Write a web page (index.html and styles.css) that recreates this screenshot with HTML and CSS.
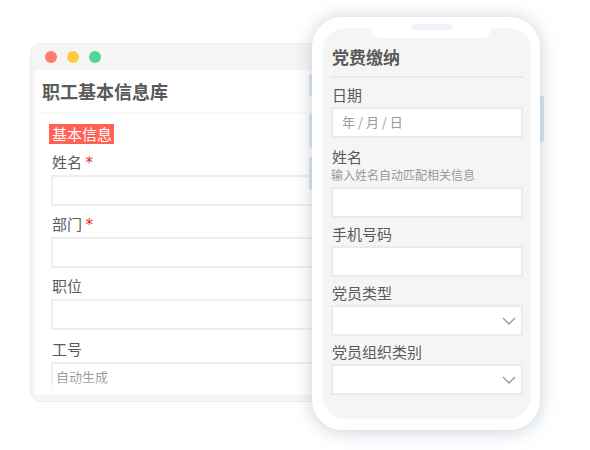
FILE: index.html
```html
<!DOCTYPE html>
<html lang="zh-CN">
<head>
  <meta charset="utf-8">
  <meta name="viewport" content="width=device-width, initial-scale=1">
  <title>职工基本信息库</title>
  <link rel="stylesheet" href="styles.css">
</head>
<body>
  <main class="scene">
    <section class="window">
      <div class="window-bar">
        <span class="dot dot-red"></span>
        <span class="dot dot-yellow"></span>
        <span class="dot dot-green"></span>
      </div>
      <div class="window-body">
        <h1 class="window-title">职工基本信息库</h1>
        <form class="window-form">
          <h2 class="tag">基本信息</h2>
          <div class="field">
            <label class="label" for="name">姓名 <span class="required">*</span></label>
            <input class="control" id="name" type="text">
          </div>
          <div class="field">
            <label class="label" for="department">部门 <span class="required">*</span></label>
            <input class="control" id="department" type="text">
          </div>
          <div class="field">
            <label class="label" for="position">职位</label>
            <input class="control" id="position" type="text">
          </div>
          <div class="field">
            <label class="label" for="number">工号</label>
            <input class="control" id="number" type="text" placeholder="自动生成">
          </div>
        </form>
      </div>
    </section>

    <section class="phone">
      <span class="key key-mute"></span>
      <span class="key key-up"></span>
      <span class="key key-down"></span>
      <span class="key key-power"></span>
      <div class="phone-case">
        <div class="phone-screen">
          <div class="notch">
            <svg class="notch-shape" viewBox="0 0 120 10" preserveAspectRatio="none" aria-hidden="true">
              <path d="M0 0H120C120 6 116 10 110 10H10C4 10 0 6 0 0Z" fill="#fff"/>
            </svg>
            <span class="speaker"></span>
          </div>
          <h1 class="phone-title">党费缴纳</h1>
          <form class="phone-form">
            <div class="field">
              <label class="label" for="date">日期</label>
              <input class="control control-date" id="date" type="text" placeholder="年 / 月 / 日">
            </div>
            <div class="field field-hinted">
              <label class="label" for="member">姓名</label>
              <p class="hint" id="member-hint">输入姓名自动匹配相关信息</p>
              <input class="control" id="member" type="text" aria-describedby="member-hint">
            </div>
            <div class="field">
              <label class="label" for="mobile">手机号码</label>
              <input class="control" id="mobile" type="tel">
            </div>
            <div class="field">
              <label class="label" for="type">党员类型</label>
              <div class="select">
                <select class="control" id="type"><option></option></select>
                <svg class="chevron" viewBox="0 0 14 8" aria-hidden="true"><path d="M1 1L7 7L13 1"/></svg>
              </div>
            </div>
            <div class="field">
              <label class="label" for="group">党员组织类别</label>
              <div class="select">
                <select class="control" id="group"><option></option></select>
                <svg class="chevron" viewBox="0 0 14 8" aria-hidden="true"><path d="M1 1L7 7L13 1"/></svg>
              </div>
            </div>
          </form>
        </div>
      </div>
    </section>
  </main>
</body>
</html>
```
FILE: styles.css
```css
* {
  box-sizing: border-box;
}

body {
  margin: 0;
  background: #fff;
  color: #5a5a5a;
  font-family: "Noto Sans CJK SC", "Noto Sans", sans-serif;
  font-size: 15px;
}

h1,
h2,
p {
  margin: 0;
}

.scene {
  display: grid;
  grid-template-columns: minmax(0, 1fr) 228px;
  align-items: start;
  padding: 17px 50px 20px 30px;
}

/* Desktop window, tucked under the phone on its right side */
.window {
  margin: 26px -20px 0 0;
  padding: 0 0 6px 4px;
  border: 1px solid #ececec;
  border-radius: 11px;
  background: #f5f5f5;
}

.window-bar {
  display: flex;
  align-items: center;
  gap: 10px;
  height: 26px;
  padding-left: 10px;
}

.dot {
  width: 12px;
  height: 12px;
  border-radius: 50%;
}

.dot-red {
  background: #fe7b72;
}

.dot-yellow {
  background: #ffcb3d;
}

.dot-green {
  background: #4ed692;
}

.window-body {
  position: relative;
  padding-bottom: 2px;
  background: #fff;
}

/* The form fades out towards the bottom edge */
.window-body::after {
  content: "";
  position: absolute;
  inset: auto 0 0 0;
  height: 16px;
  background: linear-gradient(rgba(255, 255, 255, 0), #fff 75%);
}

.window-title {
  margin-left: 5px;
  padding-left: 2px;
  border-bottom: 2px solid #f9f9f9;
  font-size: 18px;
  line-height: 42px;
}

.window-form {
  padding: 10px 0 0 16px;
}

.tag {
  width: fit-content;
  margin: 0 0 9px -2px;
  padding: 0 2px 0 3px;
  background: #ff6155;
  color: #fff;
  font-size: 15px;
  font-weight: 400;
  line-height: 20px;
}

.field {
  display: flex;
  flex-direction: column;
}

.label {
  padding-left: 1px;
  line-height: 18px;
}

.required {
  color: #f02020;
  font-family: "DejaVu Sans", sans-serif;
  line-height: 1;
}

.control {
  display: block;
  width: 100%;
  height: 31px;
  margin: 0;
  padding: 0 3px 2px;
  border: 2px solid #ebebeb;
  border-radius: 1px;
  outline: 0;
  background: #fff;
  color: #5a5a5a;
  font: inherit;
  font-size: 13px;
  appearance: none;
}

.control::placeholder {
  color: #999;
  opacity: 1;
}

.window-form .field {
  gap: 4px;
}

.window-form .field + .field {
  margin-top: 9px;
}

.window-form .field:last-child {
  padding-top: 1px;
}

.window-form .control {
  border-color: #eee;
}

/* Phone */
.phone {
  position: relative;
  z-index: 1;
}

.phone-case {
  position: relative;
  padding: 11px 9px 11px 11px;
  border-radius: 30px;
  background: #fff;
  box-shadow: 0 1px 18px rgba(150, 170, 190, 0.55);
}

.phone-screen {
  position: relative;
  padding: 10px 8px 24px;
  border-radius: 22px;
  background: #f5f5f5;
}

.notch {
  position: absolute;
  top: 0;
  left: 48px;
  right: 40px;
  height: 10px;
}

.notch-shape {
  display: block;
  width: 100%;
  height: 100%;
}

.speaker {
  position: absolute;
  top: -4px;
  left: 41px;
  right: 38px;
  height: 6px;
  border-radius: 3px;
  background: #eff3f9;
}

.key {
  position: absolute;
  left: -3px;
  width: 6px;
  border-radius: 2px;
  background: #dbe3ea;
}

.key-mute {
  top: 57px;
  height: 22px;
}

.key-up {
  top: 97px;
  height: 34px;
}

.key-down {
  top: 140px;
  height: 33px;
}

.key-power {
  top: 79px;
  left: auto;
  right: -4px;
  height: 46px;
}

.phone-title {
  margin-left: -1px;
  padding-left: 2px;
  border-bottom: 2px solid #e9e9e9;
  font-size: 17px;
  line-height: 38px;
}

.phone-form {
  padding-top: 8px;
}

.phone-form .field {
  gap: 3px;
}

.phone-form .field + .field {
  margin-top: 7px;
}

.phone-form .field-hinted {
  padding-top: 3px;
}

.hint {
  margin-top: -3px;
  color: #999;
  font-size: 12px;
  line-height: 18px;
}

.phone-form .control-date {
  padding-left: 9px;
}

.select {
  position: relative;
}

.chevron {
  position: absolute;
  top: 12px;
  right: 7px;
  width: 14px;
  height: 8px;
  fill: none;
  stroke: #999;
  stroke-width: 1.4;
  pointer-events: none;
}
```
